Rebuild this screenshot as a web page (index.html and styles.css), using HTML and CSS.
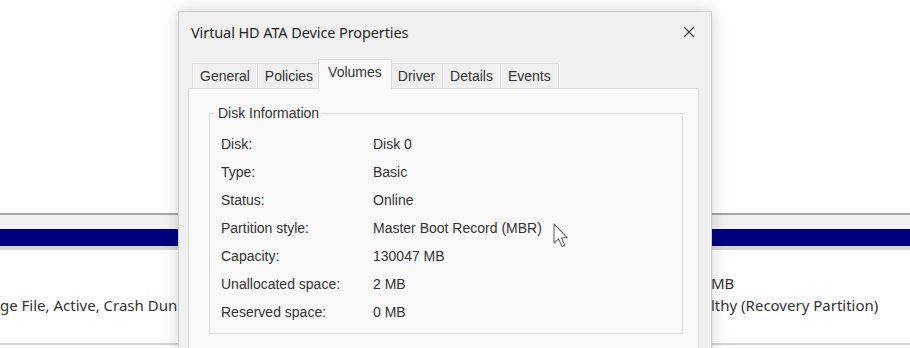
FILE: index.html
```html
<!DOCTYPE html>
<html lang="en">
<head>
    <meta charset="UTF-8">
    <title>Virtual HD ATA Device Properties</title>
    <link rel="stylesheet" href="styles.css">
</head>
<body>
    <div class="volume-list">
        <div class="list-top"></div>
        <div class="list-header"></div>
        <div class="list-selected"></div>
        <div class="list-rows">
            <div class="list-row">
                <span class="cell-left"></span>
                <span class="cell-right">MB</span>
            </div>
            <div class="list-row">
                <span class="cell-left">ge File, Active, Crash Dun</span>
                <span class="cell-right">lthy (Recovery Partition)</span>
            </div>
        </div>
    </div>

    <div class="dialog">
        <div class="title-bar">
            <span class="title">Virtual HD ATA Device Properties</span>
            <svg class="close" width="12" height="12" viewBox="0 0 12 12">
                <path d="M1 1 L11 11 M11 1 L1 11" stroke="#3a3a3a" stroke-width="1.1" fill="none"/>
            </svg>
        </div>

        <div class="tabs">
            <div class="tab">General</div>
            <div class="tab">Policies</div>
            <div class="tab active">Volumes</div>
            <div class="tab">Driver</div>
            <div class="tab">Details</div>
            <div class="tab">Events</div>
        </div>

        <div class="panel">
            <fieldset class="group">
                <legend>Disk Information</legend>
                <div class="info-row"><span class="label">Disk:</span><span>Disk 0</span></div>
                <div class="info-row"><span class="label">Type:</span><span>Basic</span></div>
                <div class="info-row"><span class="label">Status:</span><span>Online</span></div>
                <div class="info-row"><span class="label">Partition style:</span><span>Master Boot Record (MBR)</span></div>
                <div class="info-row"><span class="label">Capacity:</span><span>130047 MB</span></div>
                <div class="info-row"><span class="label">Unallocated space:</span><span>2 MB</span></div>
                <div class="info-row"><span class="label">Reserved space:</span><span>0 MB</span></div>
            </fieldset>
        </div>
    </div>

    <svg class="cursor" width="16" height="26" viewBox="0 0 16 26">
        <path d="M1 1 L1 20 L5.5 15.8 L9 23.5 L11.8 22.3 L8.4 14.8 L14.5 14.8 Z" fill="#ffffff" stroke="#6a6a6a" stroke-width="1.1" stroke-linejoin="round"/>
    </svg>
</body>
</html>
```

FILE: styles.css
```css
* {
    margin: 0;
    padding: 0;
    box-sizing: border-box;
}

body {
    width: 910px;
    height: 348px;
    overflow: hidden;
    position: relative;
    background: #ffffff;
    font-family: "Liberation Sans", Arial, sans-serif;
    font-size: 14px;
    color: #333333;
}

/* disk management list behind the dialog */
.volume-list {
    display: flex;
    flex-direction: column;
}

.list-top {
    height: 213px;
    background: #ffffff;
}

.list-header {
    height: 16px;
    background: #f2f2f2;
    border-top: 2px solid #a6a6a6;
}

.list-selected {
    height: 21px;
    background: #00007f;
    border-bottom: 4px solid #d8d8d8;
}

.list-rows {
    height: 95px;
    padding-top: 22px;
    border-bottom: 2px solid #d4d4d4;
    font-family: "Noto Sans", "Open Sans", sans-serif;
    font-size: 15px;
    color: #333333;
}

.list-row {
    display: flex;
    height: 22px;
    line-height: 22px;
    white-space: nowrap;
}

.cell-left {
    width: 178px;
    overflow: hidden;
}

.cell-right {
    margin-left: 533px;
}

/* properties dialog */
.dialog {
    position: absolute;
    left: 178px;
    top: 11px;
    width: 534px;
    height: 360px;
    background: #f0f0f0;
    border: 1px solid #cbcbcb;
    box-shadow: 0 0 16px rgba(0, 0, 0, 0.18);
}

.title-bar {
    display: flex;
    align-items: center;
    justify-content: space-between;
    height: 40px;
    padding: 0 16px 0 12px;
}

.title {
    font-family: "Noto Sans", "Open Sans", sans-serif;
    font-size: 14.5px;
    color: #1f1f1f;
    letter-spacing: -0.1px;
}

.tabs {
    display: flex;
    align-items: flex-end;
    height: 36px;
    padding-left: 13px;
}

.tab {
    height: 25px;
    line-height: 24px;
    padding: 0 7px;
    background: #f0f0f0;
    border: 1px solid #dedede;
    border-bottom: none;
    margin-right: -1px;
    color: #333333;
}

.tab.active {
    height: 30px;
    line-height: 25px;
    padding: 0 9px;
    margin: 0 -2px -1px -2px;
    background: #f9f9f9;
    border-color: #d9d9d9;
    position: relative;
    z-index: 1;
}

.panel {
    margin: 0 12px 0 9px;
    height: 300px;
    background: #f9f9f9;
    border: 1px solid #dcdcdc;
    padding: 16px 15px 0 20px;
}

.group {
    border: 1px solid #dcdcdc;
    padding: 9px 0 7px 11px;
}

.group legend {
    margin-left: -6px;
    padding: 0 3px;
    line-height: 16px;
}

.info-row {
    display: flex;
    height: 28px;
    line-height: 28px;
}

.label {
    width: 152px;
}

.cursor {
    position: absolute;
    left: 553px;
    top: 223px;
}
```
